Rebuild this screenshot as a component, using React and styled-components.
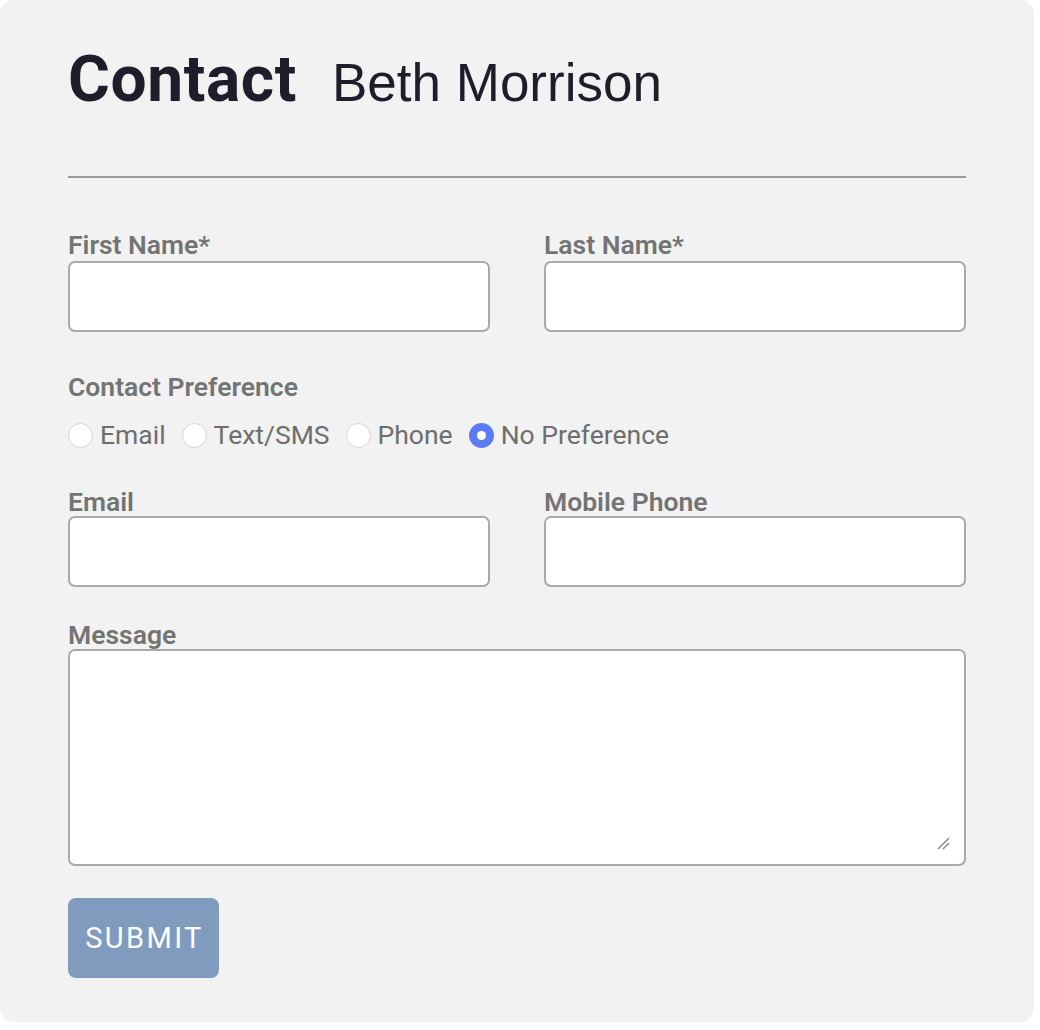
import React from "react";
import styled, { createGlobalStyle } from "styled-components";

const Global = createGlobalStyle`
  html, body { margin: 0; padding: 0; background: #ffffff; }
  body { font-family: Roboto, "Liberation Sans", Arial, sans-serif; }
  * { box-sizing: border-box; }
`;

const Card = styled.div`
  width: 1034px;
  height: 1022px;
  background: #f2f2f2;
  border-radius: 14px;
  padding: 40px 68px 0 68px;
  display: flex;
  flex-direction: column;
`;

const Header = styled.div`
  display: flex;
  align-items: baseline;
  gap: 35px;
  height: 80px;
`;

const Title = styled.h1`
  margin: 0;
  font-family: Roboto, "Liberation Sans", Arial, sans-serif;
  font-size: 64px;
  font-weight: 700;
  color: #1d1e2a;
  letter-spacing: 0.6px;
  line-height: 80px;
`;

const Name = styled.span`
  font-family: "Liberation Sans", Arial, sans-serif;
  font-size: 53px;
  font-weight: 400;
  color: #1d1e2a;
  line-height: 80px;
`;

const Divider = styled.hr`
  margin: 56px 0 0 0;
  border: none;
  border-top: 2px solid #9a9a9a;
  height: 0;
`;

const Row = styled.div`
  display: grid;
  grid-template-columns: 1fr 1fr;
  column-gap: 54px;
  margin-top: ${(p) => p.$mt}px;
`;

const Field = styled.div`
  display: flex;
  flex-direction: column;
`;

const Label = styled.label`
  font-size: 26.5px;
  font-weight: 600;
  color: #747474;
  line-height: 30px;
  margin-bottom: ${(p) => (p.$mb != null ? p.$mb : 0)}px;
`;

const Input = styled.div`
  height: 71px;
  background: #ffffff;
  border: 2px solid #a9a9a9;
  border-radius: 7px;
`;

const TextArea = styled.div`
  position: relative;
  height: 217px;
  background: #ffffff;
  border: 2px solid #a9a9a9;
  border-radius: 7px;
`;

const Grip = styled.svg`
  position: absolute;
  right: 14px;
  bottom: 14px;
`;

const Section = styled.div`
  margin-top: ${(p) => p.$mt}px;
  display: flex;
  flex-direction: column;
`;

const Radios = styled.div`
  display: flex;
  align-items: center;
  margin-top: 18px;
  gap: 16px;
`;

const RadioItem = styled.div`
  display: flex;
  align-items: center;
  gap: 7px;
  font-size: 26.5px;
  color: #6e6e6e;
  line-height: 30px;
`;

const Circle = styled.span`
  width: 25px;
  height: 25px;
  border-radius: 50%;
  flex: none;
  background: ${(p) => (p.$on ? "#5b7cf5" : "#ffffff")};
  border: ${(p) => (p.$on ? "none" : "1.5px solid #d4d4d4")};
  display: flex;
  align-items: center;
  justify-content: center;
  &::after {
    content: "";
    display: ${(p) => (p.$on ? "block" : "none")};
    width: 9px;
    height: 9px;
    border-radius: 50%;
    background: #ffffff;
  }
`;

const Submit = styled.button`
  margin-top: 32px;
  width: 151px;
  height: 80px;
  background: #809bbd;
  border: none;
  border-radius: 8px;
  color: #ffffff;
  font-family: Roboto, "Liberation Sans", Arial, sans-serif;
  font-size: 29px;
  font-weight: 400;
  letter-spacing: 2.4px;
  padding: 0 0 0 2px;
`;

export default function App() {
  const options = ["Email", "Text/SMS", "Phone", "No Preference"];
  return (
    <>
      <Global />
      <Card>
        <Header>
          <Title>Contact</Title>
          <Name>Beth Morrison</Name>
        </Header>
        <Divider />
        <Row $mt={52}>
          <Field>
            <Label $mb={1}>First Name*</Label>
            <Input />
          </Field>
          <Field>
            <Label $mb={1}>Last Name*</Label>
            <Input />
          </Field>
        </Row>
        <Section $mt={40}>
          <Label>Contact Preference</Label>
          <Radios>
            {options.map((o, i) => (
              <RadioItem key={o}>
                <Circle $on={i === 3} />
                {o}
              </RadioItem>
            ))}
          </Radios>
        </Section>
        <Row $mt={37}>
          <Field>
            <Label $mb={-1}>Email</Label>
            <Input />
          </Field>
          <Field>
            <Label $mb={-1}>Mobile Phone</Label>
            <Input />
          </Field>
        </Row>
        <Section $mt={33}>
          <Label $mb={-1}>Message</Label>
          <TextArea>
            <Grip width="14" height="14" viewBox="0 0 14 14">
              <line x1="2" y1="13" x2="13" y2="2" stroke="#8a8a8a" strokeWidth="1.5" />
              <line x1="7" y1="13" x2="13" y2="7" stroke="#8a8a8a" strokeWidth="1.5" />
            </Grip>
          </TextArea>
        </Section>
        <Submit>SUBMIT</Submit>
      </Card>
    </>
  );
}
